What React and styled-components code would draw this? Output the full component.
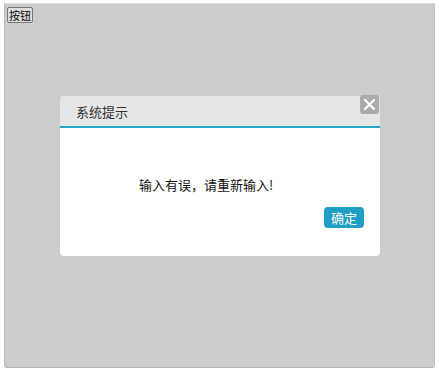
import React from "react";
import styled, { createGlobalStyle } from "styled-components";

const Global = createGlobalStyle`
  html, body { margin: 0; padding: 0; background: #ffffff; }
  body { font-family: "Noto Sans CJK SC", "Liberation Sans", sans-serif; }
`;

const Frame = styled.div`
  position: relative;
  margin: 3px 0 0 4px;
  width: 431px;
  height: 365px;
  box-sizing: border-box;
  background: #cccccc;
  border-top: 1px solid #dedede;
  border-left: 1px solid #bdbdbd;
  border-right: 1px solid #c2c2c2;
  border-bottom: 1px solid #b5b5b5;
  border-radius: 0 0 3px 3px;
  padding: 3px 2px;
`;

const PageButton = styled.button`
  display: block;
  font-family: "Noto Sans CJK SC", sans-serif;
  font-size: 11px;
  line-height: 13px;
  height: 16px;
  padding: 0 1px;
  margin: 0;
  color: #111;
  background: #dcdcdc;
  border: 1px solid #777;
  border-radius: 2px;
`;

const Dialog = styled.div`
  position: absolute;
  left: 55px;
  top: 92px;
  width: 320px;
  height: 160px;
  background: #ffffff;
  border-radius: 4px;
  display: flex;
  flex-direction: column;
`;

const TitleBar = styled.div`
  height: 30px;
  background: #e6e6e6;
  border-radius: 4px 4px 0 0;
  border-bottom: 2px solid #29a3c6;
  display: flex;
  align-items: center;
  padding-left: 16px;
  font-size: 13px;
  color: #333;
`;

const Close = styled.div`
  position: absolute;
  right: 1px;
  top: -1px;
  width: 19px;
  height: 19px;
  background: #ababab;
  border-radius: 3px;
  display: flex;
  align-items: center;
  justify-content: center;
`;

const Body = styled.div`
  flex: 1;
  display: flex;
  flex-direction: column;
  padding: 0 16px;
`;

const Message = styled.div`
  margin-top: 48px;
  padding-right: 28px;
  text-align: center;
  font-size: 13px;
  color: #111;
  line-height: 18px;
`;

const Actions = styled.div`
  display: flex;
  justify-content: flex-end;
  margin-top: 13px;
`;

const Confirm = styled.button`
  width: 40px;
  height: 21px;
  padding: 0;
  border: none;
  border-radius: 4px;
  background: #1f9ec6;
  color: #fff;
  font-family: "Noto Sans CJK SC", sans-serif;
  font-size: 13px;
  line-height: 21px;
`;

export default function App() {
  return (
    <>
      <Global />
      <Frame>
        <PageButton>按钮</PageButton>
        <Dialog>
          <TitleBar>系统提示</TitleBar>
          <Close>
            <svg width="13" height="13" viewBox="0 0 13 13">
              <path d="M2 2 L11 11 M11 2 L2 11" stroke="#fff" strokeWidth="2.2" strokeLinecap="round" />
            </svg>
          </Close>
          <Body>
            <Message>输入有误，请重新输入!</Message>
            <Actions>
              <Confirm>确定</Confirm>
            </Actions>
          </Body>
        </Dialog>
      </Frame>
    </>
  );
}
